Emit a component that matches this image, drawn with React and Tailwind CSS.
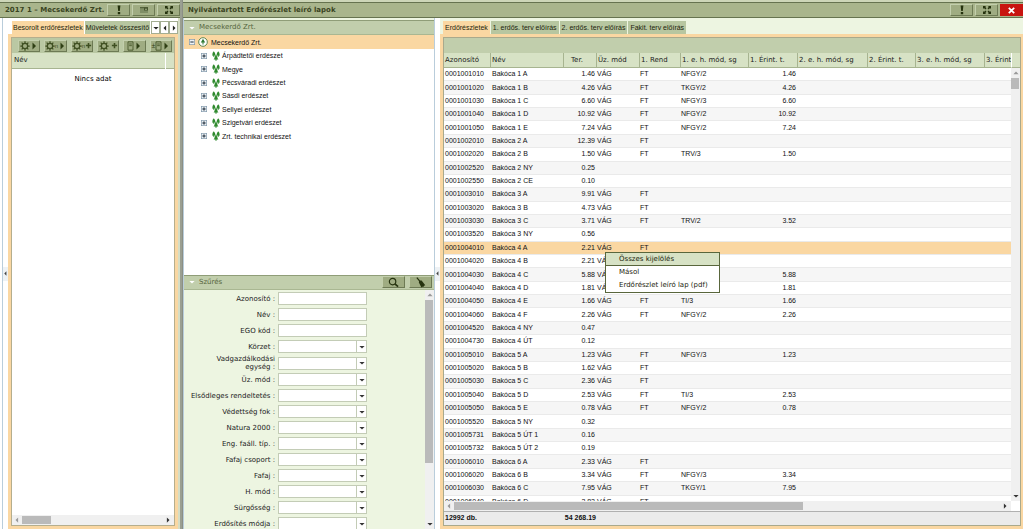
import React from "react";

const rows = [
  ["0001001010", "Bakóca 1 A", "1.46", "VÁG", "FT", "NFGY/2", "1.46"],
  ["0001001020", "Bakóca 1 B", "4.26", "VÁG", "FT", "TKGY/2", "4.26"],
  ["0001001030", "Bakóca 1 C", "6.60", "VÁG", "FT", "NFGY/3", "6.60"],
  ["0001001040", "Bakóca 1 D", "10.92", "VÁG", "FT", "NFGY/2", "10.92"],
  ["0001001050", "Bakóca 1 E", "7.24", "VÁG", "FT", "NFGY/2", "7.24"],
  ["0001002010", "Bakóca 2 A", "12.39", "VÁG", "FT", "", ""],
  ["0001002020", "Bakóca 2 B", "1.50", "VÁG", "FT", "TRV/3", "1.50"],
  ["0001002520", "Bakóca 2 NY", "0.25", "", "", "", ""],
  ["0001002550", "Bakóca 2 CE", "0.10", "", "", "", ""],
  ["0001003010", "Bakóca 3 A", "9.91", "VÁG", "FT", "", ""],
  ["0001003020", "Bakóca 3 B", "4.73", "VÁG", "FT", "", ""],
  ["0001003030", "Bakóca 3 C", "3.71", "VÁG", "FT", "TRV/2", "3.52"],
  ["0001003520", "Bakóca 3 NY", "0.56", "", "", "", ""],
  ["0001004010", "Bakóca 4 A", "2.21", "VÁG", "FT", "", ""],
  ["0001004020", "Bakóca 4 B", "2.21", "VÁG", "", "", ""],
  ["0001004030", "Bakóca 4 C", "5.88", "VÁG", "", "", "5.88"],
  ["0001004040", "Bakóca 4 D", "1.81", "VÁG", "", "", "1.81"],
  ["0001004050", "Bakóca 4 E", "1.66", "VÁG", "FT", "TI/3", "1.66"],
  ["0001004060", "Bakóca 4 F", "2.26", "VÁG", "FT", "NFGY/2", "2.26"],
  ["0001004520", "Bakóca 4 NY", "0.47", "", "", "", ""],
  ["0001004730", "Bakóca 4 ÚT", "0.12", "", "", "", ""],
  ["0001005010", "Bakóca 5 A", "1.23", "VÁG", "FT", "NFGY/3", "1.23"],
  ["0001005020", "Bakóca 5 B", "1.62", "VÁG", "FT", "", ""],
  ["0001005030", "Bakóca 5 C", "2.36", "VÁG", "FT", "", ""],
  ["0001005040", "Bakóca 5 D", "2.53", "VÁG", "FT", "TI/3", "2.53"],
  ["0001005050", "Bakóca 5 E", "0.78", "VÁG", "FT", "NFGY/2", "0.78"],
  ["0001005520", "Bakóca 5 NY", "0.32", "", "", "", ""],
  ["0001005731", "Bakóca 5 ÚT 1", "0.16", "", "", "", ""],
  ["0001005732", "Bakóca 5 ÚT 2", "0.19", "", "", "", ""],
  ["0001006010", "Bakóca 6 A", "2.33", "VÁG", "FT", "", ""],
  ["0001006020", "Bakóca 6 B", "3.34", "VÁG", "FT", "NFGY/3", "3.34"],
  ["0001006030", "Bakóca 6 C", "7.95", "VÁG", "FT", "TKGY/1", "7.95"],
  ["0001006040", "Bakóca 6 D", "2.82", "VÁG", "FT", "", ""],
];
const selectedId = "0001004010";

const columns = [
  { label: "Azonosító", width: "w-[47px]" },
  { label: "Név", width: "w-[73px]" },
  { label: "Ter.", width: "w-[33px]", pad: "pl-[7px]" },
  { label: "Üz. mód", width: "w-[43px]" },
  { label: "1. Rend", width: "w-[41px]" },
  { label: "1. e. h. mód, sg", width: "w-[68px]" },
  { label: "1. Érint. t.", width: "w-[49px]" },
  { label: "2. e. h. mód, sg", width: "w-[70px]" },
  { label: "2. Érint. t.", width: "w-[48px]" },
  { label: "3. e. h. mód, sg", width: "w-[69px]" },
  { label: "3. Érint. t.", width: "w-auto" },
];

const fields = [
  { id: "azonosito", label: "Azonosító :" },
  { id: "nev", label: "Név :" },
  { id: "ego", label: "EGO kód :" },
  { id: "korzet", label: "Körzet :", select: true },
  { id: "vad", label: "Vadgazdálkodási egység :", select: true, tall: true },
  { id: "uzmod", label: "Üz. mód :", select: true },
  { id: "rend", label: "Elsődleges rendeltetés :", select: true },
  { id: "vedettseg", label: "Védettség fok :", select: true },
  { id: "natura", label: "Natura 2000 :", select: true },
  { id: "faall", label: "Eng. faáll. típ. :", select: true },
  { id: "csoport", label: "Fafaj csoport :", select: true },
  { id: "fafaj", label: "Fafaj :", select: true },
  { id: "hmod", label: "H. mód :", select: true },
  { id: "surgosseg", label: "Sürgősség :", select: true },
  { id: "erdosites", label: "Erdősítés módja :", select: true },
];

const treeItems = [
  "Árpádtetői erdészet",
  "Megye",
  "Pécsváradi erdészet",
  "Sásdi erdészet",
  "Sellyei erdészet",
  "Szigetvári erdészet",
  "Zrt. technikai erdészet",
];

const arrowPaths = {
  left: "M5.500 .5v7L2 4z",
  right: "M2.500 .5v7L6 4z",
  up: "M.5 5.500h7L4 2z",
  down: "M.5 2.500h7L4 6z",
};

function Arrow({ dir, className = "size-[6px] fill-[#333]" }) {
  return (
    <svg viewBox="0 0 8 8" className={`shrink-0 ${className}`} aria-hidden="true">
      <path d={arrowPaths[dir]} />
    </svg>
  );
}

function Exclamation() {
  return (
    <svg viewBox="0 0 10 10" className="size-[10px] fill-[#26330f]" aria-hidden="true">
      <path d="M3.600 .5h2.800L5.800 6H4.200zM3.800 7h2.400v2.200H3.800z" />
    </svg>
  );
}

function Restore() {
  return (
    <svg viewBox="0 0 10 10" className="size-[10px]" aria-hidden="true">
      <path d="M1 2h8v6H1z" fill="#7f8e66" />
      <path d="M1 2h8v1.200H1z" fill="#55633c" />
      <path d="M5 2.500h4v3H5z" fill="#46542e" />
      <path d="M6 3.700h2v1H6z" fill="#a5b28a" />
    </svg>
  );
}

function Expand() {
  return (
    <svg viewBox="0 0 10 10" className="size-[10px] fill-[#26330f]" aria-hidden="true">
      <path d="M1 1h3L3.200 1.900 4.500 3.200 3.300 4.400 2 3.100 1 4zM9 1v3L8 3.100 6.700 4.400 5.500 3.200 6.800 1.900 6 1zM1 9V6l1 .9 1.300-1.300 1.200 1.200L3.200 8.100 4 9zM9 9H6l.8-.9-1.300-1.300 1.200-1.200L8 6.900 9 6z" />
    </svg>
  );
}

function Gear() {
  return (
    <svg viewBox="0 0 12 12" className="size-[10px] shrink-0" fill="none" stroke="#3f4f22" aria-hidden="true">
      <circle cx="6" cy="6" r="3.200" strokeWidth="1.500" />
      <path
        d="M6 .4v2M6 9.600v2M.4 6h2M9.600 6h2M2 2l1.500 1.500M8.500 8.500L10 10M10 2L8.500 3.500M3.500 8.500L2 10"
        strokeWidth="1.500"
      />
    </svg>
  );
}

function Sheet() {
  return (
    <svg viewBox="0 0 8 12" className="h-[10px] w-[7px] shrink-0" fill="none" stroke="#3f4f22" aria-hidden="true">
      <path d="M1 1h6v10H1z" />
      <path d="M2.400 3.600h3.200M2.400 5.600h3.200" />
    </svg>
  );
}

function Plus() {
  return (
    <svg viewBox="0 0 8 8" className="size-[7px] shrink-0" stroke="#3f4f22" strokeWidth="1.800" aria-hidden="true">
      <path d="M1 4h6M4 1v6" />
    </svg>
  );
}

const bevel =
  "flex items-center justify-center border border-t-[#c3cfad] border-l-[#c3cfad] border-r-[#6d7a54] border-b-[#6d7a54] bg-[#9fac82]";

function TitleButton({ label, children, close }) {
  return (
    <button
      aria-label={label}
      className={
        close
          ? "flex h-[12px] w-[23px] items-center justify-center bg-[#c8140f]"
          : `${bevel} h-[12px] w-[23px]`
      }
    >
      {children}
    </button>
  );
}

function TitleBar({ title, children }) {
  return (
    <header className="mt-[2px] flex h-[16px] shrink-0 items-center border-y border-[#66734f] bg-[#a9b58c]">
      <h1 className="min-w-0 flex-1 pl-[5px] font-['DejaVu_Sans',sans-serif] text-[7px] leading-[14px] font-bold whitespace-nowrap text-[#3a4422]">
        {title}
      </h1>
      <div className="flex gap-[2px]">{children}</div>
    </header>
  );
}

function ToolButton({ label, children }) {
  return (
    <button aria-label={label} className={`${bevel} h-[12px] min-w-0 flex-1`}>
      {children}
    </button>
  );
}

function Tab({ active, tight, children }) {
  return (
    <button
      role="tab"
      aria-selected={Boolean(active)}
      className={`h-[13px] shrink-0 text-[7px] leading-[13px] whitespace-nowrap text-[#1c240c] ${
        tight ? "px-px" : "px-[2px]"
      } ${active ? "bg-[#fad7a2]" : "bg-[#b7c6a0]"}`}
    >
      {children}
    </button>
  );
}

function Splitter() {
  return (
    <div className="flex w-[6px] shrink-0 items-center justify-center border-l border-[#b9cddb] bg-white">
      <button aria-label="Panel összecsukása" className="flex h-[14px] items-center bg-[#eef2f5]">
        <Arrow dir="left" className="size-[5px] fill-[#444]" />
      </button>
    </div>
  );
}

function HScroll({ thumb }) {
  return (
    <div className="flex h-[10px] shrink-0 items-center bg-[#f0f0f0]">
      <button aria-label="Balra" className="flex w-[10px] justify-center">
        <Arrow dir="left" className="size-[6px] fill-[#999]" />
      </button>
      <div className="flex h-[8px] min-w-0 flex-1">
        <div className={`h-full bg-[#bababa] ${thumb}`} />
      </div>
      <button aria-label="Jobbra" className="flex w-[12px] justify-center">
        <Arrow dir="right" />
      </button>
    </div>
  );
}

function VScroll({ thumb }) {
  return (
    <div className="flex w-[9px] shrink-0 flex-col items-center bg-[#f0f0f0]">
      <button aria-label="Fel" className="flex h-[10px] items-center">
        <Arrow dir="up" className="size-[6px] fill-[#999]" />
      </button>
      <div className="min-h-0 w-full flex-1">
        <div className={`w-[8px] bg-[#bababa] ${thumb}`} />
      </div>
      <button aria-label="Le" className="flex h-[11px] items-center">
        <Arrow dir="down" />
      </button>
    </div>
  );
}

function PanelHeader({ title, children }) {
  return (
    <div className="flex h-[15px] shrink-0 items-center border-y border-t-[#8f9d78] border-b-[#a9b792] bg-[#c1ceac] pr-[2px]">
      <span className="flex w-[15px] justify-center">
        <Arrow dir="down" className="size-[6px] fill-white" />
      </span>
      <h2 className="flex-1 font-['DejaVu_Sans',sans-serif] text-[7px] leading-[13px] text-[#56653c]">{title}</h2>
      <div className="flex gap-[4px]">{children}</div>
    </div>
  );
}

function LeftWindow() {
  return (
    <section className="flex w-[180px] shrink-0 flex-col bg-[#cdd6b8]">
      <TitleBar title="2017 1 – Mecsekerdő Zrt.">
        <TitleButton label="Figyelmeztetés"><Exclamation /></TitleButton>
        <TitleButton label="Visszaállítás"><Restore /></TitleButton>
        <TitleButton label="Teljes méret"><Expand /></TitleButton>
      </TitleBar>
      <div className="flex min-h-0 flex-1 bg-white pl-[2px]">
        <Splitter />
        <div className="flex min-w-0 flex-1 flex-col pt-[3px]">
          <div className="flex pl-[4px]" role="tablist">
            <div className="flex min-w-0 flex-1 gap-px">
              <Tab active tight>Besorolt erdőrészletek</Tab>
              <Tab tight>Műveletek összesítő</Tab>
            </div>
            {["down", "left", "right"].map((d) => (
              <button
                key={d}
                aria-label={`Fülek ${d}`}
                className="flex h-[13px] w-[9px] items-center justify-center border border-[#a3ad92] bg-white"
              >
                <Arrow dir={d} className="size-[6px] fill-[#222]" />
              </button>
            ))}
          </div>
          <div className="flex min-h-0 flex-1 flex-col border-[3px] border-[#fad7a2] bg-[#fad7a2]">
            <div className="flex min-h-0 flex-1 flex-col border border-[#b5ae8d] bg-white">
              <div className="flex h-[15px] shrink-0 items-center gap-[4px] bg-[#bac8a3] pr-[2px] pl-[6px]">
                <ToolButton label="Futtatás"><Gear /><Arrow dir="right" className="size-[8px] fill-[#2f3f14]" /></ToolButton>
                <ToolButton label="Futtatás egyenként"><Gear /><span className="text-[6px] leading-[10px] text-[#3f4f22]">n</span><Arrow dir="right" className="size-[8px] fill-[#2f3f14]" /></ToolButton>
                <ToolButton label="Több hozzáadása"><Gear /><span className="text-[6px] leading-[10px] text-[#3f4f22]">n</span><Plus /></ToolButton>
                <ToolButton label="Hozzáadás"><Gear /><span className="pl-[2px]"><Plus /></span></ToolButton>
                <ToolButton label="Lap"><Sheet /><Arrow dir="right" className="size-[8px] fill-[#2f3f14]" /></ToolButton>
                <ToolButton label="Lap módosítása"><span className="text-[7px] leading-[7px] text-[#2f3f14]">±</span><Sheet /><Arrow dir="right" className="size-[8px] fill-[#2f3f14]" /></ToolButton>
              </div>
              <table className="w-full table-fixed border-collapse">
                <thead>
                  <tr className="h-[15px] border-b border-[#a7b490] bg-[#d7e2c5]">
                    <th className="border-r border-white p-0 pl-[2px] text-left font-['DejaVu_Sans',sans-serif] text-[7px] leading-[14px] font-normal text-[#222]">
                      Név
                    </th>
                    <td className="w-[9px] p-0" />
                  </tr>
                </thead>
                <tbody>
                  <tr>
                    <td colSpan={2} className="p-0 pt-[4px] text-center font-['DejaVu_Sans',sans-serif] text-[7px] leading-[12px] text-black">
                      Nincs adat
                    </td>
                  </tr>
                </tbody>
              </table>
              <div className="flex-1" />
              <HScroll thumb="w-[29px]" />
            </div>
          </div>
        </div>
        <div className="w-[2px] bg-[#d5ddc4]" />
      </div>
    </section>
  );
}

function ExpandBox({ open }) {
  return (
    <svg viewBox="0 0 9 9" className="size-[6px] shrink-0" fill="none" aria-hidden="true">
      <rect x=".5" y=".5" width="8" height="8" fill="#eef3f7" stroke="#7d95a8" />
      <path d={open ? "M2 4.500h5" : "M2 4.500h5M4.500 2v5"} stroke="#1c2a38" strokeWidth="1.500" />
    </svg>
  );
}

function Trees() {
  return (
    <svg viewBox="0 0 10 12" className="h-[10px] w-[8px] shrink-0 fill-[#2f8a2e]" aria-hidden="true">
      <path d="M2.200 0L4.200 3H3.600L4.800 5.400H2.900V6.800H1.500V5.400H0L1 3H.2zM7.800 0L9.800 3H9L10 5.400H8.500V6.800H7.100V5.400H5.200L6.400 3H5.800zM5 4.800L7.200 7.800H6.400L8 10.400H5.700V12H4.300V10.400H2L3.600 7.800H2.800z" />
    </svg>
  );
}

function TreePanel() {
  return (
    <nav className="flex min-h-0 flex-[255] flex-col bg-white">
      <PanelHeader title="Mecsekerdő Zrt." />
      <ul className="text-[7px] leading-[13px] text-[#111]">
        <li>
          <div className="flex h-[14px] items-center gap-[3px] bg-[#fad7a2] pl-[5px]">
            <ExpandBox open />
            <svg viewBox="0 0 10 10" className="size-[10px] shrink-0" aria-hidden="true">
              <circle cx="5" cy="5" r="4.300" fill="#fff" stroke="#4e7d45" strokeWidth=".9" />
              <path d="M5 1.800l2.200 3.800H5.500v2h-1v-2H2.800z" fill="#2f7a33" />
            </svg>
            <span>Mecsekerdő Zrt.</span>
          </div>
          <ul className="grid h-[94px] auto-rows-fr">
            {treeItems.map((t) => (
              <li key={t} className="flex items-center pl-[17px]">
                <ExpandBox />
                <span className="pl-[5px]"><Trees /></span>
                <span className="pl-[2px]">{t}</span>
              </li>
            ))}
          </ul>
        </li>
      </ul>
    </nav>
  );
}

function Field({ field }) {
  const box = "block h-[13px] w-full appearance-none border border-[#c3ccb6] bg-white px-[2px] text-[7px]";
  return (
    <div className={`flex shrink-0 items-center ${field.tall ? "h-[17px]" : "h-[16px]"}`}>
      <label
        htmlFor={field.id}
        className="flex w-[92px] justify-end pr-[3px] text-right font-['DejaVu_Sans',sans-serif] text-[7px] leading-[8px] text-[#222]"
      >
        <span className={field.tall ? "w-[70px]" : "whitespace-nowrap"}>{field.label}</span>
      </label>
      <div className="relative w-[89px]">
        {field.select ? (
          <>
            <select id={field.id} className={box} defaultValue="">
              <option value="" />
            </select>
            <span className="pointer-events-none absolute inset-y-0 right-0 flex w-[11px] items-center justify-center border border-[#c3ccb6]">
              <Arrow dir="down" className="size-[6px] fill-[#333]" />
            </span>
          </>
        ) : (
          <input id={field.id} type="text" className={box} />
        )}
      </div>
    </div>
  );
}

function FilterPanel() {
  return (
    <div className="flex min-h-0 flex-[255] flex-col">
      <PanelHeader title="Szűrés">
        <button aria-label="Keresés" className={`${bevel} h-[12px] w-[23px]`}>
          <svg viewBox="0 0 12 12" className="size-[11px]" fill="none" stroke="#26330f" aria-hidden="true">
            <circle cx="5" cy="5" r="3.500" strokeWidth="1.300" />
            <path d="M7.500 7.500l3.500 3" strokeWidth="1.800" />
          </svg>
        </button>
        <button aria-label="Szűrő törlése" className={`${bevel} h-[12px] w-[23px]`}>
          <svg viewBox="0 0 12 12" className="size-[11px] fill-[#26330f]" aria-hidden="true">
            <path d="M1.500 1l1-.7 3 3.400 1.700.1 4 5.200-1.400.6-.6 1.200-1.300-.2-.9.900L4.200 6l.2-1.500z" />
          </svg>
        </button>
      </PanelHeader>
      <div className="flex min-h-0 flex-1">
        <form className="flex min-w-0 flex-1 flex-col overflow-hidden pt-px pl-[2px]">
          {fields.map((f) => (
            <Field key={f.id} field={f} />
          ))}
        </form>
        <VScroll thumb="h-3/4" />
      </div>
    </div>
  );
}

function ContextMenu() {
  const item = "block h-[13px] w-full pl-[13px] text-left leading-[13px] whitespace-nowrap";
  return (
    <div
      role="menu"
      className="absolute top-[199px] left-[161px] w-[115px] border border-[#59663c] bg-white font-['DejaVu_Sans',sans-serif] text-[7px] text-[#1c240c]"
    >
      <button role="menuitem" className={`${item} border-b border-[#59663c] bg-[#d7e2c5]`}>Összes kijelölés</button>
      <button role="menuitem" className={item}>Másol</button>
      <button role="menuitem" className={item}>Erdőrészlet leíró lap (pdf)</button>
    </div>
  );
}

function Columns() {
  return (
    <colgroup>
      {columns.map((c) => (
        <col key={c.label} className={c.width} />
      ))}
    </colgroup>
  );
}

function cellPadding(i) {
  if (i === 2 || i === 6) return "pr-[2px] text-right";
  return i < 2 ? "pl-px" : "";
}

function DataGrid() {
  return (
    <div className="flex min-h-0 flex-1 flex-col border border-[#a9a98c] bg-white">
      <div className="h-[15px] shrink-0 bg-[#c1ceac]" />
      <div className="flex min-h-0 flex-1">
        <div className="flex min-w-0 flex-1 flex-col">
          <div className="relative min-h-0 flex-1">
            <div className="h-full overflow-hidden">
              <table className="w-full table-fixed border-separate border-spacing-0">
                <Columns />
                <thead>
                  <tr className="h-[15px] bg-[#d7e2c5]">
                    {columns.map((c) => (
                      <th
                        key={c.label}
                        className={`overflow-hidden border-r border-b border-[#a7b490] py-0 pr-0 text-left font-['DejaVu_Sans',sans-serif] text-[7px] leading-[14px] font-normal whitespace-nowrap text-[#222] last:border-r-0 ${
                          c.pad || "pl-px"
                        }`}
                      >
                        {c.label}
                      </th>
                    ))}
                  </tr>
                </thead>
              </table>
              <table className="h-[441px] w-full table-fixed border-separate border-spacing-0 text-[7px] leading-[10px] text-[#111]">
                <Columns />
                <tbody>
                  {rows.map((r) => (
                    <tr
                      key={r[0]}
                      className={
                        r[0] === selectedId ? "bg-[#fad7a2]" : "odd:bg-white even:bg-[#f6f6f6]"
                      }
                    >
                      {columns.map((c, i) => (
                        <td
                          key={c.label}
                          className={`border-b border-[#eaeaea] py-0 whitespace-nowrap ${cellPadding(i)}`}
                        >
                          {r[i] || ""}
                        </td>
                      ))}
                    </tr>
                  ))}
                </tbody>
              </table>
            </div>
            <ContextMenu />
          </div>
          <HScroll thumb="w-[64%]" />
        </div>
        <div className="flex w-[9px] shrink-0 flex-col">
          <div className="h-[15px] shrink-0 border-b border-l border-b-[#a7b490] border-l-white bg-[#d7e2c5]" />
          <div className="flex min-h-0 flex-1">
            <VScroll thumb="h-[11px]" />
          </div>
          <div className="h-[10px] shrink-0" />
        </div>
      </div>
      <div className="flex h-[14px] shrink-0 items-center border-t border-[#b0b0b0] bg-[#ebebeb] pl-px text-[7px] font-bold text-[#111]">
        <span className="w-[118px]">12992 db.</span>
        <span className="w-[33px] text-right whitespace-nowrap">54 268.19</span>
      </div>
    </div>
  );
}

function RightWindow() {
  return (
    <section className="flex min-w-0 flex-1 flex-col border-l border-[#8b8f86] bg-[#cdd6b8]">
      <TitleBar title="Nyilvántartott Erdőrészlet leíró lapok">
        <TitleButton label="Figyelmeztetés"><Exclamation /></TitleButton>
        <TitleButton label="Teljes méret"><Expand /></TitleButton>
        <TitleButton label="Bezárás" close>
          <svg viewBox="0 0 10 10" className="size-[9px]" stroke="#fff" strokeWidth="2" aria-hidden="true">
            <path d="M2 2l6 6M8 2l-6 6" />
          </svg>
        </TitleButton>
      </TitleBar>
      <div className="flex min-h-0 flex-1 bg-[#edf5e1]">
        <div className="flex w-[251px] shrink-0 flex-col border-l border-[#b9cddb] pt-[2px]">
          <TreePanel />
          <FilterPanel />
        </div>
        <Splitter />
        <main className="flex min-w-0 flex-1 flex-col pt-[3px]">
          <div className="flex h-[13px] shrink-0 gap-px pl-[3px]" role="tablist">
            <Tab active>Erdőrészletek</Tab>
            <Tab>1. erdős. terv előírás</Tab>
            <Tab>2. erdős. terv előírás</Tab>
            <Tab>Fakit. terv előírás</Tab>
          </div>
          <div className="flex min-h-0 flex-1 flex-col border-[3px] border-r-[2px] border-[#fad7a2]">
            <DataGrid />
          </div>
        </main>
      </div>
    </section>
  );
}

export default function App() {
  return (
    <div className="flex h-screen w-full gap-[2px] overflow-hidden bg-[#9a9f92] font-['Liberation_Sans',Arial,sans-serif]">
      <LeftWindow />
      <RightWindow />
    </div>
  );
}
